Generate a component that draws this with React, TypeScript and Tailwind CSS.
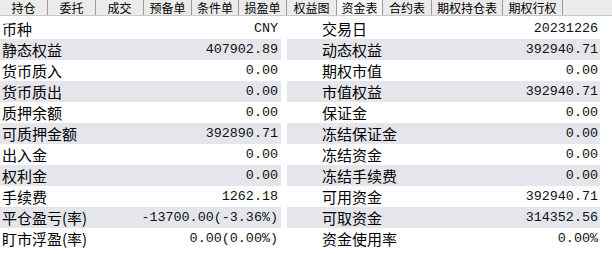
const tabs = [
  { name: '持仓', w: 48 },
  { name: '委托', w: 48 },
  { name: '成交', w: 48 },
  { name: '预备单', w: 48 },
  { name: '条件单', w: 47 },
  { name: '损盈单', w: 48 },
  { name: '权益图', w: 50 },
  { name: '资金表', w: 46, active: true },
  { name: '合约表', w: 49 },
  { name: '期权持仓表', w: 71 },
  { name: '期权行权', w: 60 },
];

const leftRows = [
  ['币种', 'CNY'],
  ['静态权益', '407902.89'],
  ['货币质入', '0.00'],
  ['货币质出', '0.00'],
  ['质押余额', '0.00'],
  ['可质押金额', '392890.71'],
  ['出入金', '0.00'],
  ['权利金', '0.00'],
  ['手续费', '1262.18'],
  ['平仓盈亏(率)', '-13700.00(-3.36%)'],
  ['盯市浮盈(率)', '0.00(0.00%)'],
];

const rightRows = [
  ['交易日', '20231226'],
  ['动态权益', '392940.71'],
  ['期权市值', '0.00'],
  ['市值权益', '392940.71'],
  ['保证金', '0.00'],
  ['冻结保证金', '0.00'],
  ['冻结资金', '0.00'],
  ['冻结手续费', '0.00'],
  ['可用资金', '392940.71'],
  ['可取资金', '314352.56'],
  ['资金使用率', '0.00%'],
];

const cjk = "font-['Noto_Sans_CJK_SC',sans-serif]";
const mono = "font-['Liberation_Mono','Noto_Sans_CJK_SC',monospace]";

const Panel = ({ rows, left }: { rows: string[][]; left: boolean }) => (
  <div className={left ? 'w-[281px]' : 'w-[313px]'}>
    {rows.map(([label, value], i) => (
      <div
        key={label}
        className={`flex h-[21px] items-center justify-between ${left ? 'pl-[2px] pr-[3px]' : 'pl-[35px] pr-[2px]'} ${
          i % 2 === 1 ? 'bg-[#e4e6ec]' : 'bg-white'
        }`}
      >
        <span className={`${cjk} text-[15px] leading-none text-black`}>{label}</span>
        <span className={`${mono} text-[13.4px] leading-none text-[#111]`}>{value}</span>
      </div>
    ))}
  </div>
);

export default function App() {
  return (
    <div className="h-[254px] w-[612px] overflow-hidden bg-white">
      <div className="flex h-[16px] border-b border-[#c9c9c9] bg-[#ebebeb]">
        {tabs.map((t) => (
          <div
            key={t.name}
            style={{ width: t.w }}
            className={`flex shrink-0 items-center justify-center border-r border-[#9a9a9a] ${cjk} text-[12px] leading-none text-black ${
              t.active ? 'bg-[#f7f7f7]' : ''
            }`}
          >
            {t.name}
          </div>
        ))}
      </div>
      <div className="h-[2px]" />
      <div className="flex gap-[6px]">
        <Panel rows={leftRows} left />
        <Panel rows={rightRows} left={false} />
      </div>
    </div>
  );
}
